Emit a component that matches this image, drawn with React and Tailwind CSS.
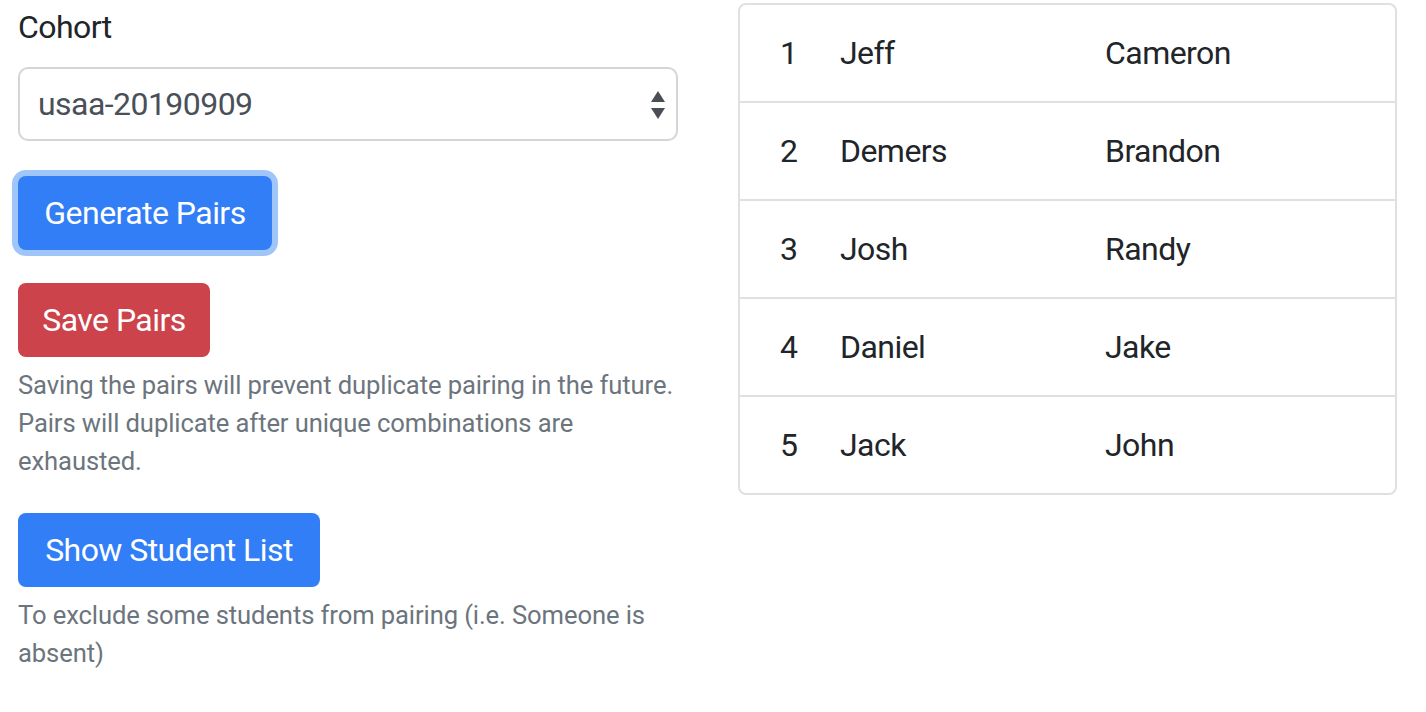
import React from 'react';

const pairs = [
  ['1', 'Jeff', 'Cameron'],
  ['2', 'Demers', 'Brandon'],
  ['3', 'Josh', 'Randy'],
  ['4', 'Daniel', 'Jake'],
  ['5', 'Jack', 'John'],
];

function SelectArrows() {
  return (
    <svg width="16" height="32" viewBox="0 0 16 32" className="absolute right-[10px] top-[20px]">
      <path d="M8 2 L15 13 L1 13 Z" fill="#4a4f55" />
      <path d="M1 19 L15 19 L8 30 Z" fill="#4a4f55" />
    </svg>
  );
}

export default function App() {
  return (
    <div className="w-[1426px] h-[712px] bg-white text-[#212529] flex gap-[60px] pl-[18px] pt-[3px] tracking-[-0.55px]" style={{ fontFamily: 'Roboto, "Liberation Sans", sans-serif' }}>
      {/* left column: form */}
      <div className="w-[660px] flex flex-col items-start">
        <label className="text-[32px] leading-[48px] mb-[16px]">Cohort</label>
        <div className="relative w-full h-[74px] border-2 border-[#d3d6d9] rounded-[10px] flex items-center pl-[18px] mb-[35px]">
          <span className="text-[32px] text-[#495057]">usaa-20190909</span>
          <SelectArrows />
        </div>

        <button className="h-[74px] w-[254px] rounded-[8px] bg-[#317ef6] text-white text-[32px] ring-[6px] ring-[#a0c6f9]">
          Generate Pairs
        </button>

        <button className="mt-[33px] h-[74px] w-[192px] rounded-[8px] bg-[#cc434b] text-white text-[32px]">
          Save Pairs
        </button>
        <p className="mt-[9px] text-[25.6px] leading-[38px] text-[#6c757d] tracking-[-0.1px]">
          Saving the pairs will prevent duplicate pairing in the future. Pairs will duplicate after unique combinations are exhausted.
        </p>

        <button className="mt-[33px] h-[74px] w-[302px] rounded-[8px] bg-[#317ef6] text-white text-[32px]">
          Show Student List
        </button>
        <p className="mt-[9px] text-[25.6px] leading-[38px] text-[#6c757d] tracking-[-0.1px]">
          To exclude some students from pairing (i.e. Someone is absent)
        </p>
      </div>

      {/* right column: pairs list */}
      <div className="w-[659px]">
        <div className="border-2 border-[#e0e0e0] rounded-[8px]">
          {pairs.map(([n, a, b], i) => (
            <div
              key={n}
              className={
                'flex items-center text-[32px] pl-[40px] ' +
                (i === 0 ? 'h-[96px]' : 'h-[98px] border-t-2 border-[#e0e0e0]')
              }
            >
              <span className="w-[60px]">{n}</span>
              <span className="w-[265px]">{a}</span>
              <span>{b}</span>
            </div>
          ))}
        </div>
      </div>
    </div>
  );
}
